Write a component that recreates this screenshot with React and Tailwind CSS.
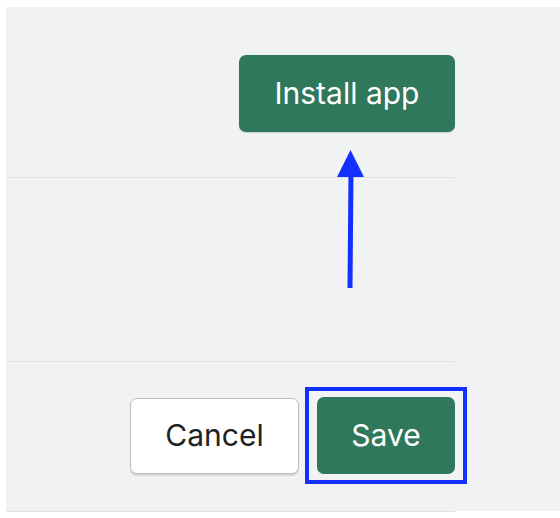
export default function App() {
  return (
    <div
      className="relative h-[518px] w-[560px] overflow-hidden bg-white pl-[6px] pt-[7px]"
      style={{ fontFamily: "Inter, 'Noto Sans', sans-serif" }}
    >
      <div className="h-[504px] bg-[#f1f2f4]">
        <div className="w-[449px]">
          {/* header row */}
          <div className="flex h-[170px] justify-end pt-[48px]">
            <button
              type="button"
              className="h-[77px] w-[216px] rounded-[7px] bg-[#30785c] text-[30px] text-white shadow-[0_1px_1px_rgba(0,0,0,0.15)]"
            >
              Install app
            </button>
          </div>
          <div className="h-px bg-[#dfe1e3]" />

          <div className="h-[183px]" />
          <div className="h-px bg-[#dfe1e3]" />

          {/* footer actions */}
          <div className="flex h-[149px] items-start justify-end pt-[25px]">
            <div className="flex items-center gap-[6px] -mr-[12px]">
              <button
                type="button"
                className="h-[76px] w-[169px] rounded-[7px] border border-[#b9bec3] bg-white text-[30px] text-[#202223] shadow-[0_2px_1px_rgba(0,0,0,0.12)]"
              >
                Cancel
              </button>
              {/* highlight box */}
              <div className="border-4 border-[#1330ff] px-[8px] py-[6px]">
                <button
                  type="button"
                  className="block h-[77px] w-[138px] rounded-[7px] bg-[#30785c] text-[30px] text-white"
                >
                  Save
                </button>
              </div>
            </div>
          </div>
          <div className="h-px bg-[#dfe1e3]" />
        </div>
      </div>

      {/* annotation arrow */}
      <svg
        className="absolute left-[330px] top-[148px]"
        width="40"
        height="144"
        viewBox="0 0 40 144"
      >
        <line x1="21" y1="24" x2="20" y2="140" stroke="#1430ff" strokeWidth="5" />
        <polygon points="20.5,2 34,29 7,29" fill="#1430ff" />
      </svg>
    </div>
  );
}
